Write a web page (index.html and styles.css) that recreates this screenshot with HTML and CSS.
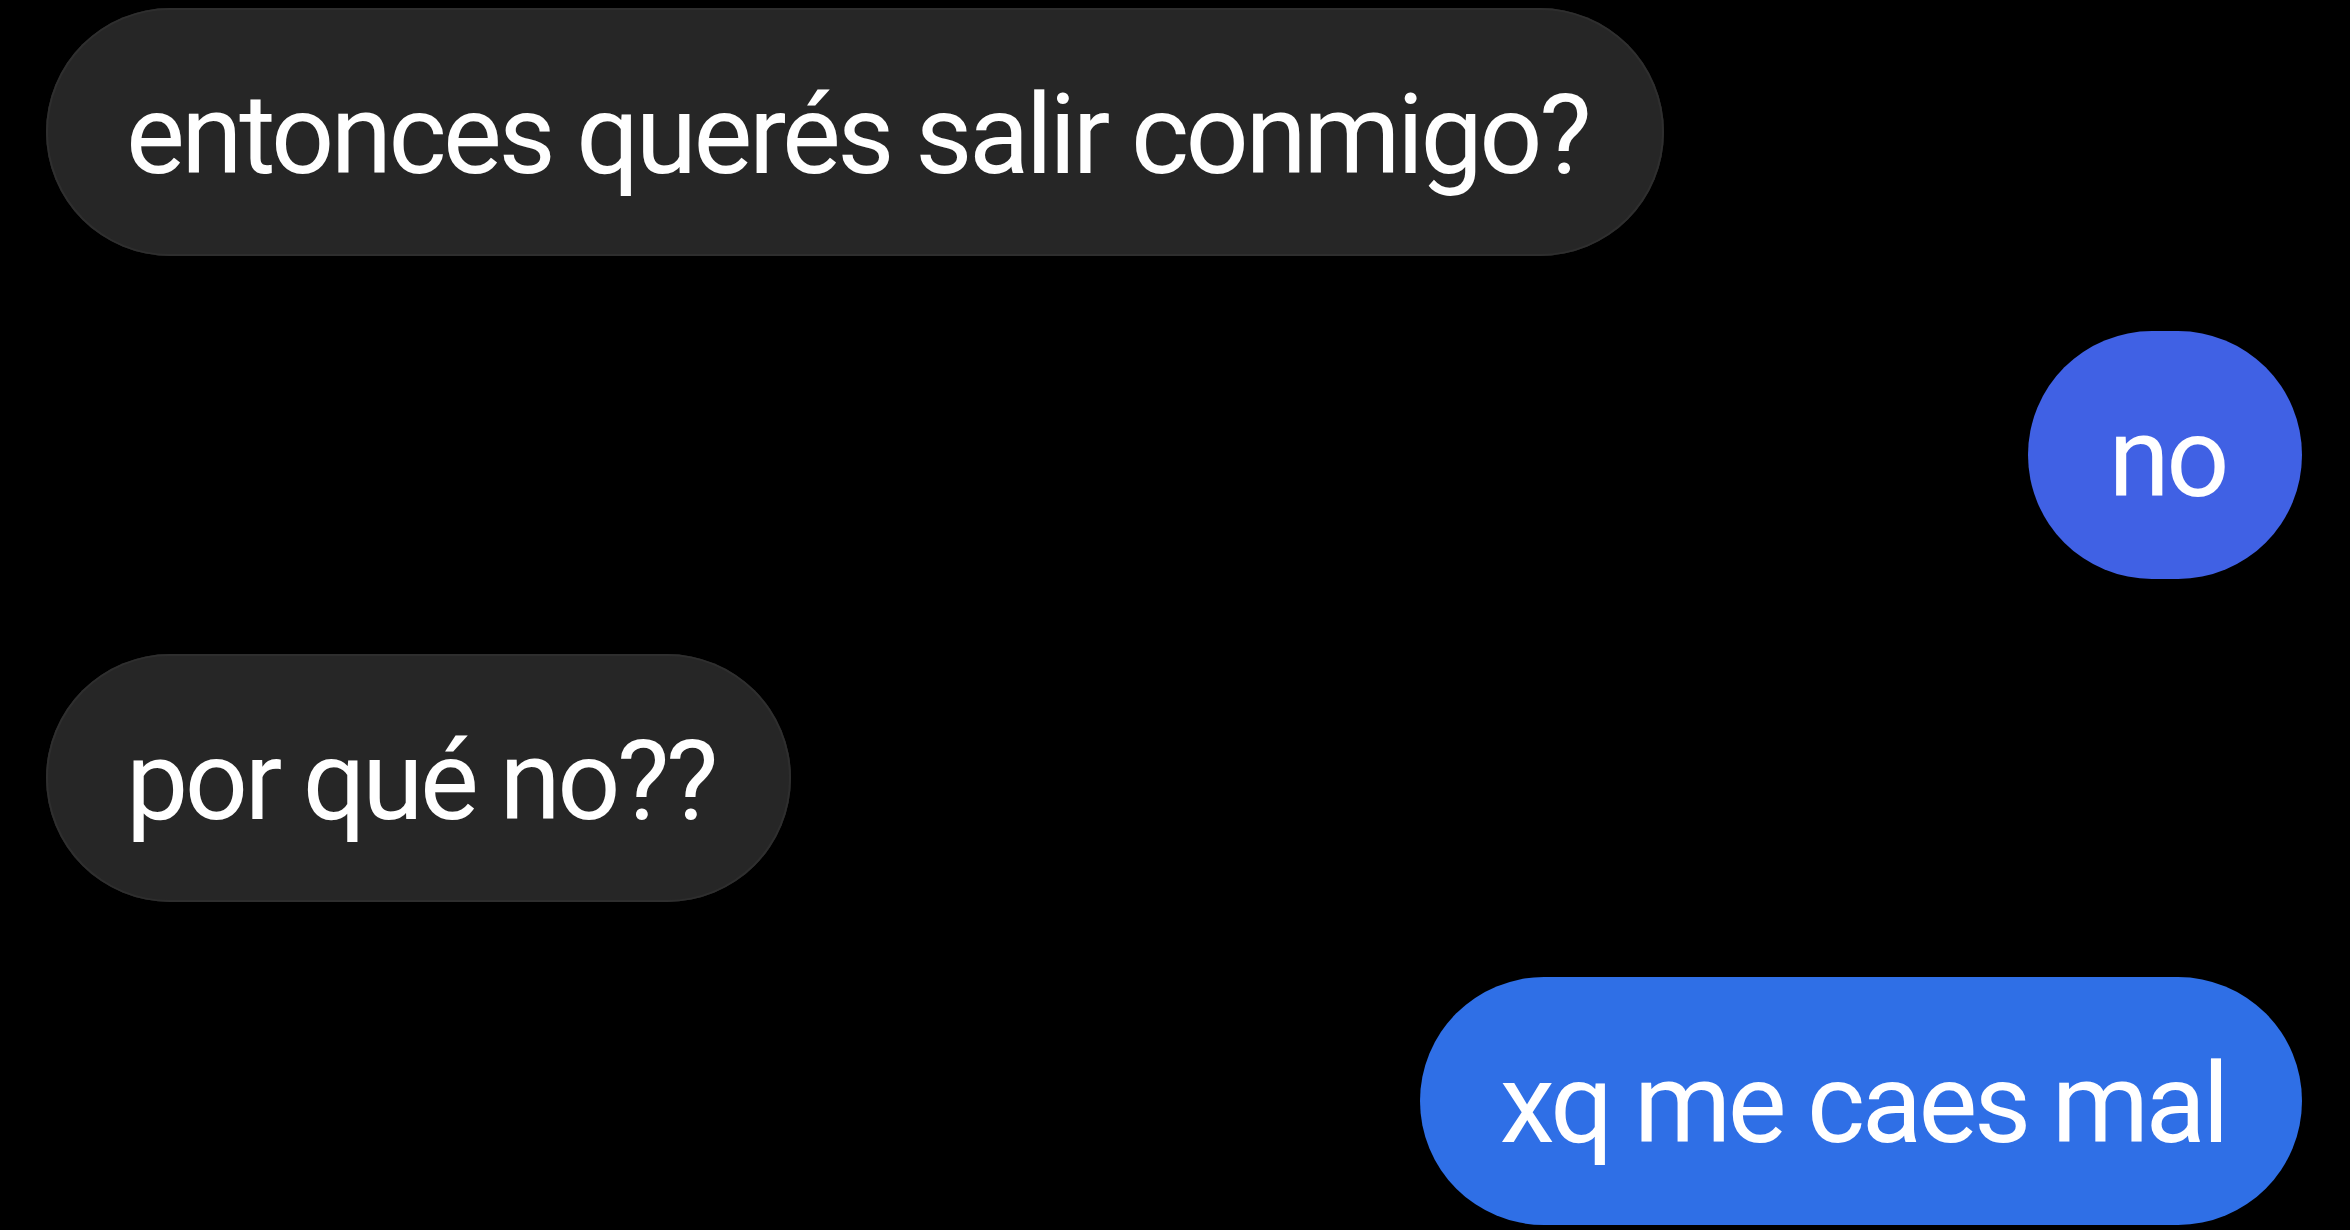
FILE: index.html
```html
<!DOCTYPE html>
<html lang="es">

<head>
    <meta charset="UTF-8">
    <meta name="viewport" content="width=device-width, initial-scale=1.0">
    <title>Chat</title>
    <link rel="stylesheet" href="styles.css">
</head>

<body>
    <div class="chat">
        <div class="msg received">entonces querés salir conmigo?</div>
        <div class="msg sent first">no</div>
        <div class="msg received">por qué no??</div>
        <div class="msg sent">xq me caes mal</div>
    </div>
</body>

</html>
```

FILE: styles.css
```css
body {
    margin: 0;
    background-color: #000;
    font-family: Roboto, "Liberation Sans", sans-serif;
}

.chat {
    display: flex;
    flex-direction: column;
    gap: 75px;
    padding: 8px 48px 0 46px;
}

.msg {
    height: 248px;
    box-sizing: border-box;
    display: flex;
    align-items: center;
    padding: 6px 76px 0 80px;
    border-radius: 124px;
    color: #fff;
    font-size: 111px;
    letter-spacing: -3.5px;
    white-space: nowrap;
}

.received {
    align-self: flex-start;
    background-color: #262626;
    box-shadow: inset 0 0 0 2px #2e2e2e;
}

.sent {
    align-self: flex-end;
    background-color: #2f6fe6;
}

.sent.first {
    background-color: #4061e4;
}
```
